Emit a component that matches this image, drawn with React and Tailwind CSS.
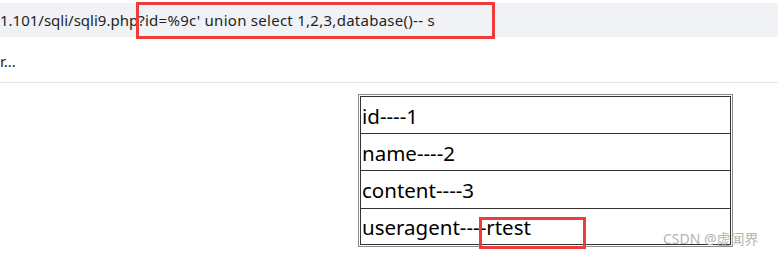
export default function App() {
  return (
    <div className="relative w-[778px] h-[257px] bg-white overflow-hidden" style={{ fontFamily: '"Noto Sans", "Noto Sans CJK SC", sans-serif' }}>
      <div className="h-[3px]" />
      <div className="h-[34px] bg-[#f0f2f5] flex items-center">
        <span className="text-[15px] text-[#1f1f1f] whitespace-nowrap leading-none">
          <span>1.101/sqli/sqli9.php</span>
          <span className="tracking-[0.27px]">?id=%9c' union select 1,2,3,database()-- s</span>
        </span>
      </div>
      <div className="h-[46px] border-b border-[#e4e4e4] flex items-center pt-[3px]">
        <span className="text-[15px] text-[#1f1f1f] leading-none">r...</span>
      </div>
      <div className="pt-[11px] pl-[358px]">
        <div className="w-[375px] border border-[#8a8a8a] p-px">
          <div className="border border-[#333]">
            <div className="h-[36px] flex items-center pl-[1px] pt-[2px] text-[20.5px] text-black leading-none">id----1</div>
            <div className="h-[37px] flex items-center pl-[1px] pt-[2px] text-[20.5px] text-black leading-none border-t border-[#333]">name----2</div>
            <div className="h-[38px] flex items-center pl-[1px] pt-[2px] text-[20.5px] text-black leading-none border-t border-[#333]">content----3</div>
            <div className="h-[36px] flex items-center pl-[1px] pt-[2px] text-[20.5px] text-black leading-none border-t border-[#333]">useragent----rtest</div>
          </div>
        </div>
      </div>
      <div className="absolute left-[136px] top-[2px] w-[359px] h-[37px] border-[3px] border-[#ef3b3b]" />
      <div className="absolute left-[479px] top-[217px] w-[107px] h-[32px] border-[3px] border-[#ef3b3b]" />
      <div className="absolute left-[663px] top-[232px] text-[14px] text-[#b5b5b5] leading-none whitespace-nowrap">CSDN @虚闻界</div>
    </div>
  );
}
